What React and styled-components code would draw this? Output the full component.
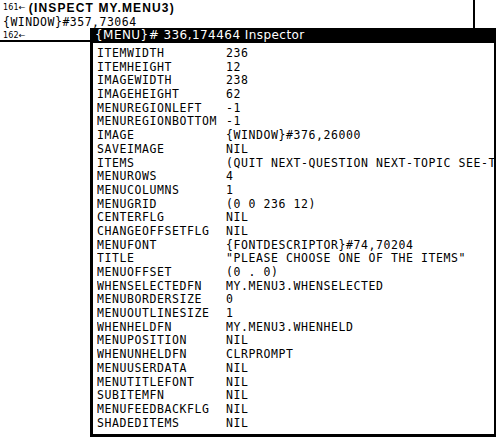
import React from "react";
import styled, { createGlobalStyle } from "styled-components";

const Global = createGlobalStyle`
  html, body { margin: 0; padding: 0; background: #fff; }
  body { width: 496px; height: 437px; overflow: hidden; }
`;

const Desktop = styled.div`
  position: relative;
  width: 496px;
  height: 437px;
  overflow: hidden;
  background: #fff;
  color: #000;
`;

const ExecWindow = styled.div`
  position: absolute;
  left: -2px;
  top: -2px;
  width: 477px;
  height: 44px;
  box-sizing: border-box;
  border: 2px solid #000;
  background: #fff;
  padding-left: 3px;
  display: flex;
  flex-direction: column;
`;

const ExecLine = styled.div`
  height: ${(p) => p.$h}px;
  line-height: ${(p) => p.$h}px;
  white-space: nowrap;
  font-family: "DejaVu Sans Mono", monospace;
  font-size: 11.5px;
  letter-spacing: 0.5px;
`;

const Prompt = styled.span`
  font-family: "DejaVu Sans", sans-serif;
  font-size: 8px;
  letter-spacing: 0.2px;
  vertical-align: ${(p) => (p.$raised ? "2px" : "baseline")};
  margin-right: ${(p) => (p.$raised ? "3px" : "0")};
`;

const Command = styled.span`
  font-family: "Liberation Sans", Arial, sans-serif;
  font-weight: 700;
  font-size: 12px;
  letter-spacing: 1.15px;
`;

const Inspector = styled.div`
  position: absolute;
  left: 90px;
  top: 28px;
  width: 406px;
  height: 409px;
  display: flex;
  flex-direction: column;
  background: #fff;
`;

const TitleBar = styled.div`
  height: 15px;
  line-height: 15px;
  background: #000;
  color: #fff;
  padding-left: 5px;
  font-family: "DejaVu Sans", sans-serif;
  font-size: 12px;
  letter-spacing: 0.45px;
  white-space: nowrap;
  overflow: hidden;
`;

const Body = styled.div`
  flex: 1;
  border-left: 3px solid #000;
  border-right: 2px solid #000;
  border-bottom: 3px solid #000;
  padding: 4px 0 0 4px;
  overflow: hidden;
`;

const Row = styled.div`
  display: grid;
  grid-template-columns: 129px 1fr;
  height: 13.7px;
  line-height: 13.7px;
  font-family: "DejaVu Sans Mono", monospace;
  font-size: 11.5px;
  letter-spacing: 0.58px;
  white-space: nowrap;
`;

const Cell = styled.span`
  overflow: hidden;
`;

const rows = [
  ["ITEMWIDTH", "236"],
  ["ITEMHEIGHT", "12"],
  ["IMAGEWIDTH", "238"],
  ["IMAGEHEIGHT", "62"],
  ["MENUREGIONLEFT", "-1"],
  ["MENUREGIONBOTTOM", "-1"],
  ["IMAGE", "{WINDOW}#376,26000"],
  ["SAVEIMAGE", "NIL"],
  ["ITEMS", "(QUIT NEXT-QUESTION NEXT-TOPIC SEE-TOPICS)"],
  ["MENUROWS", "4"],
  ["MENUCOLUMNS", "1"],
  ["MENUGRID", "(0 0 236 12)"],
  ["CENTERFLG", "NIL"],
  ["CHANGEOFFSETFLG", "NIL"],
  ["MENUFONT", "{FONTDESCRIPTOR}#74,70204"],
  ["TITLE", "\"PLEASE CHOOSE ONE OF THE ITEMS\""],
  ["MENUOFFSET", "(0 . 0)"],
  ["WHENSELECTEDFN", "MY.MENU3.WHENSELECTED"],
  ["MENUBORDERSIZE", "0"],
  ["MENUOUTLINESIZE", "1"],
  ["WHENHELDFN", "MY.MENU3.WHENHELD"],
  ["MENUPOSITION", "NIL"],
  ["WHENUNHELDFN", "CLRPROMPT"],
  ["MENUUSERDATA", "NIL"],
  ["MENUTITLEFONT", "NIL"],
  ["SUBITEMFN", "NIL"],
  ["MENUFEEDBACKFLG", "NIL"],
  ["SHADEDITEMS", "NIL"],
];

export default function App() {
  return (
    <Desktop>
      <Global />
      <ExecWindow>
        <ExecLine $h={15}>
          <Prompt $raised>161←</Prompt>
          <Command>(INSPECT MY.MENU3)</Command>
        </ExecLine>
        <ExecLine $h={14}>{"{WINDOW}#357,73064"}</ExecLine>
        <ExecLine $h={11}>
          <Prompt>162←</Prompt>
        </ExecLine>
      </ExecWindow>
      <Inspector>
        <TitleBar>{"{MENU}# 336,174464 Inspector"}</TitleBar>
        <Body>
          {rows.map(([k, v]) => (
            <Row key={k}>
              <Cell>{k}</Cell>
              <Cell>{v}</Cell>
            </Row>
          ))}
        </Body>
      </Inspector>
    </Desktop>
  );
}
